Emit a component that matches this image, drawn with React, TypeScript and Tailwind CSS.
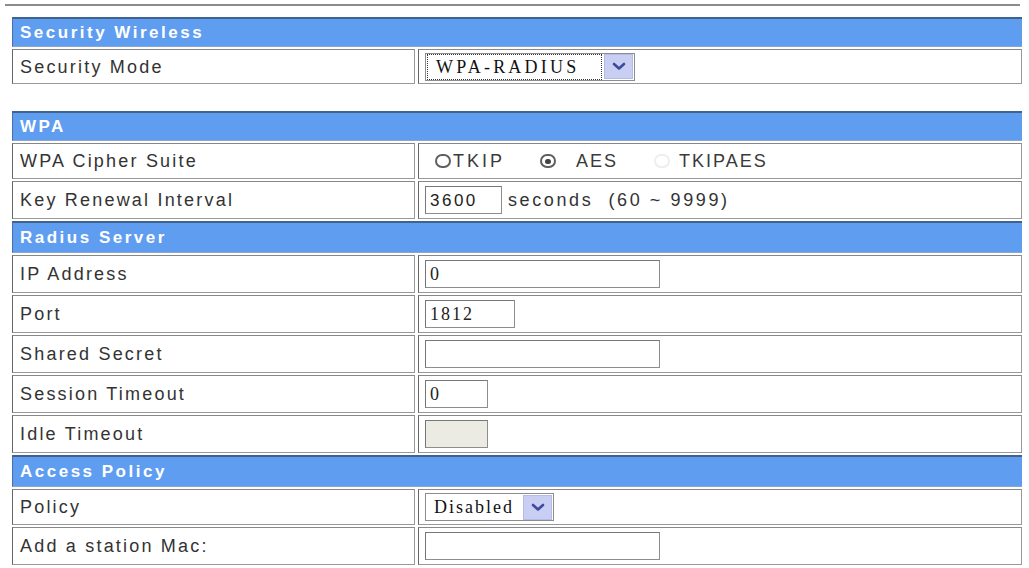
import type { ReactNode } from "react";

const sans = "font-['Liberation_Sans',Arial,sans-serif]";
const serif = "font-['Liberation_Serif','Times_New_Roman',serif]";

function Header({ title, tall }: { title: string; tall?: boolean }) {
  return (
    <div
      className={`${tall ? "h-[32px]" : "h-[30px]"} flex items-center pl-[7px] bg-[#5f9df1] border-t-2 border-[#3f628f] border-l border-l-[#4a6fa3] border-b border-b-[#8aa6cc]`}
    >
      <span className={`${sans} text-[17px] font-bold tracking-[2.5px] text-white leading-none`}>{title}</span>
    </div>
  );
}

function Row({ label, children, h = "h-[38px]" }: { label: string; children?: ReactNode; h?: string }) {
  return (
    <div className={`grid grid-cols-[403px_1fr] gap-[3px] ${h}`}>
      <div className="flex items-center pl-[7px] border border-[#999] border-l-[#666] border-t-[#888]">
        <span className={`${sans} text-[18px] tracking-[2.2px] text-[#333] leading-none`}>{label}</span>
      </div>
      <div className="flex items-center pl-[6px] border border-[#999] border-l-[#666] border-t-[#888]">
        {children}
      </div>
    </div>
  );
}

function TextBox({ w, value, mono, disabled }: { w: string; value?: string; mono?: "serif" | "sans"; disabled?: boolean }) {
  const font = mono === "sans" ? `${sans} tracking-[2.5px] text-[17px]` : `${serif} tracking-[2px] text-[18px]`;
  return (
    <div
      className={`${w} h-[28px] flex items-center pl-[4px] border border-[#8d8d8d] border-t-[#777] border-l-[#777] ${disabled ? "bg-[#ebebe4]" : "bg-white"}`}
    >
      <span className={`${font} text-[#222] leading-none`}>{value}</span>
    </div>
  );
}

function Chevron() {
  return (
    <svg width="14" height="9" viewBox="0 0 14 9">
      <path d="M2 2 L7 6.5 L12 2" fill="none" stroke="#3f4a9e" strokeWidth="2.6" strokeLinecap="round" strokeLinejoin="round" />
    </svg>
  );
}

function Select({ value, w, track, focused }: { value: string; w: string; track: string; focused?: boolean }) {
  return (
    <div className="flex items-center h-[28px] border border-[#8d8d8d] bg-white">
      <div className={`${w} h-full flex items-center pl-[8px] ${focused ? "border border-dotted border-[#333] m-[1px] h-[24px]" : ""}`}>
        <span className={`${serif} text-[18px] ${track} text-[#111] leading-none`}>{value}</span>
      </div>
      <div className="w-[29px] h-[25px] mx-[1px] flex items-center justify-center bg-[#c9cff2] border border-[#b3bbe6]">
        <Chevron />
      </div>
    </div>
  );
}

function Radio({ checked, faint }: { checked?: boolean; faint?: boolean }) {
  return (
    <span
      className={`shrink-0 flex items-center justify-center w-[16px] h-[14px] rounded-full border-2 ${faint ? "border-[#eeeeee]" : "border-[#5f5f5f]"} bg-white`}
    >
      {checked && <span className="w-[6px] h-[5px] rounded-full bg-[#444]" />}
    </span>
  );
}

export default function App() {
  const optText = `${sans} text-[18px] tracking-[2px] text-[#3a3a3a] leading-none`;
  return (
    <div className="w-[1029px] h-[568px] bg-white overflow-hidden">
      <div className="pt-[4px] pl-[5px] pr-[9px]">
        <div className="h-[2px] bg-[#8c8c8c]" />
      </div>

      <div className="ml-[12px] w-[1010px] mt-[11px] flex flex-col gap-[2px]">
        <Header title="Security Wireless" />
        <Row label="Security Mode" h="h-[35px]">
          <Select value="WPA-RADIUS" w="w-[175px]" track="tracking-[3.2px]" focused />
        </Row>
      </div>

      <div className="ml-[12px] w-[1010px] mt-[27px] flex flex-col gap-[2px]">
        <Header title="WPA" />
        <Row label="WPA Cipher Suite" h="h-[36px]">
          <div className="flex items-center">
            <span className="ml-[10px] flex"><Radio /></span>
            <span className={`${optText} ml-[2px] w-[87px] tracking-[3px]`}>TKIP</span>
            <Radio checked />
            <span className={`${optText} ml-[20px] w-[78px]`}>AES</span>
            <Radio faint />
            <span className={`${optText} ml-[9px]`}>TKIPAES</span>
          </div>
        </Row>
        <Row label="Key Renewal Interval">
          <TextBox w="w-[77px]" value="3600" mono="sans" />
          <span className={`${sans} text-[18px] tracking-[2.6px] text-[#333] leading-none ml-[6px] whitespace-pre`}>
            seconds  (60 ~ 9999)
          </span>
        </Row>
        <Header title="Radius Server" tall />
        <Row label="IP Address">
          <TextBox w="w-[235px]" value="0" />
        </Row>
        <Row label="Port">
          <TextBox w="w-[90px]" value="1812" />
        </Row>
        <Row label="Shared Secret">
          <TextBox w="w-[235px]" />
        </Row>
        <Row label="Session Timeout">
          <TextBox w="w-[63px]" value="0" />
        </Row>
        <Row label="Idle Timeout">
          <TextBox w="w-[63px]" disabled />
        </Row>
        <Header title="Access Policy" tall />
        <Row label="Policy" h="h-[36px]">
          <Select value="Disabled" w="w-[96px]" track="tracking-[2px]" />
        </Row>
        <Row label="Add a station Mac:">
          <TextBox w="w-[235px]" />
        </Row>
      </div>
    </div>
  );
}
